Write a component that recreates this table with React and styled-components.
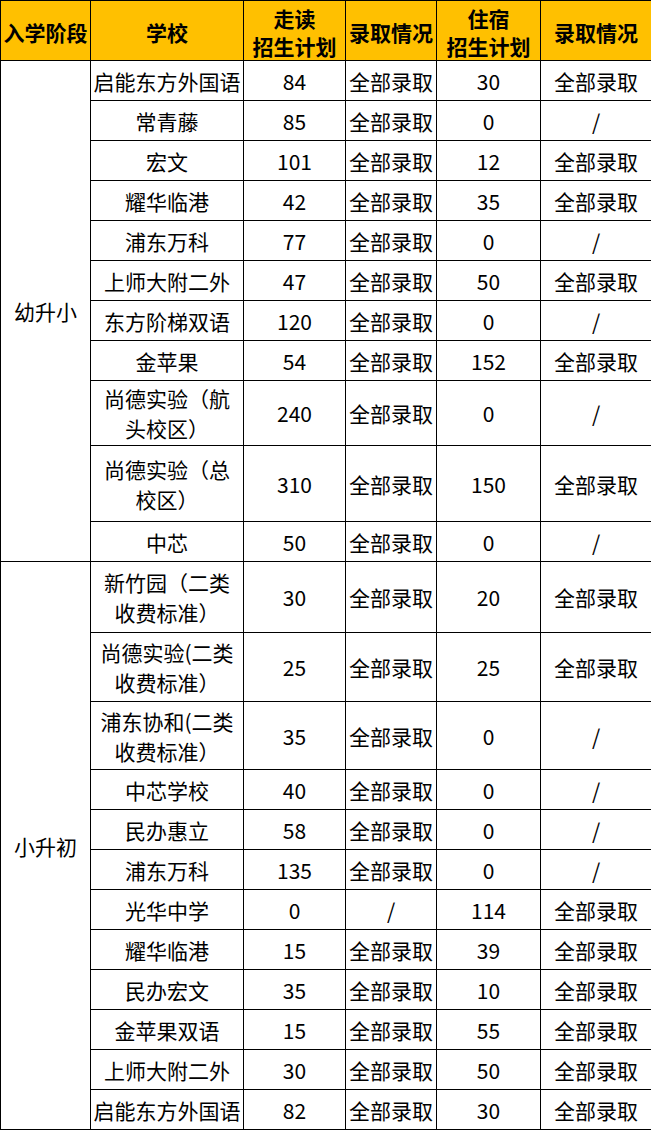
import React from "react";
import styled, { createGlobalStyle } from "styled-components";

const GlobalStyle = createGlobalStyle`
  html, body {
    margin: 0;
    padding: 0;
    background: #ffffff;
  }
  body {
    font-family: "Noto Sans CJK SC", "Microsoft YaHei", sans-serif;
    color: #000;
  }
`;

const Table = styled.table`
  width: 651px;
  border-collapse: collapse;
  table-layout: fixed;
  font-size: 21px;
  font-family: "Noto Sans CJK SC", "Microsoft YaHei", sans-serif;
`;

const HeadRow = styled.tr`
  height: 60px;
  background: #ffc000;
`;

const Th = styled.th`
  border: 1px solid #000;
  padding: 2px 0 0;
  font-weight: 700;
  text-align: center;
  vertical-align: middle;
  line-height: 28px;
  white-space: pre-line;
`;

const Row = styled.tr`
  height: ${(p) => p.$h}px;
`;

const Td = styled.td`
  border: 1px solid #000;
  padding: 0;
  text-align: center;
  vertical-align: middle;
  line-height: 30px;
  white-space: pre-line;
  font-weight: 400;
`;

const cols = [90, 153, 102, 91, 104, 111];

const headers = ["入学阶段", "学校", "走读\n招生计划", "录取情况", "住宿\n招生计划", "录取情况"];

const ALL = "全部录取";

const sections = [
  {
    stage: "幼升小",
    rows: [
      ["启能东方外国语", "84", ALL, "30", ALL, 40],
      ["常青藤", "85", ALL, "0", "/", 40],
      ["宏文", "101", ALL, "12", ALL, 40],
      ["耀华临港", "42", ALL, "35", ALL, 40],
      ["浦东万科", "77", ALL, "0", "/", 40],
      ["上师大附二外", "47", ALL, "50", ALL, 40],
      ["东方阶梯双语", "120", ALL, "0", "/", 40],
      ["金苹果", "54", ALL, "152", ALL, 40],
      ["尚德实验（航\n头校区）", "240", ALL, "0", "/", 65],
      ["尚德实验（总\n校区）", "310", ALL, "150", ALL, 76],
      ["中芯", "50", ALL, "0", "/", 40],
    ],
  },
  {
    stage: "小升初",
    rows: [
      ["新竹园（二类\n收费标准）", "30", ALL, "20", ALL, 71],
      ["尚德实验(二类\n收费标准）", "25", ALL, "25", ALL, 69],
      ["浦东协和(二类\n收费标准）", "35", ALL, "0", "/", 68],
      ["中芯学校", "40", ALL, "0", "/", 40],
      ["民办惠立", "58", ALL, "0", "/", 40],
      ["浦东万科", "135", ALL, "0", "/", 40],
      ["光华中学", "0", "/", "114", ALL, 40],
      ["耀华临港", "15", ALL, "39", ALL, 40],
      ["民办宏文", "35", ALL, "10", ALL, 40],
      ["金苹果双语", "15", ALL, "55", ALL, 40],
      ["上师大附二外", "30", ALL, "50", ALL, 40],
      ["启能东方外国语", "82", ALL, "30", ALL, 40],
    ],
  },
];

const App = () => (
  <>
    <GlobalStyle />
    <Table>
      <colgroup>
        {cols.map((w, i) => (
          <col key={i} style={{ width: w }} />
        ))}
      </colgroup>
      <thead>
        <HeadRow>
          {headers.map((h, i) => (
            <Th key={i}>{h}</Th>
          ))}
        </HeadRow>
      </thead>
      <tbody>
        {sections.map((sec) =>
          sec.rows.map(([school, walk, walkRes, board, boardRes, h], i) => (
            <Row key={sec.stage + i} $h={h}>
              {i === 0 && <Td rowSpan={sec.rows.length}>{sec.stage}</Td>}
              <Td>{school}</Td>
              <Td>{walk}</Td>
              <Td>{walkRes}</Td>
              <Td>{board}</Td>
              <Td>{boardRes}</Td>
            </Row>
          ))
        )}
      </tbody>
    </Table>
  </>
);

export default App;
